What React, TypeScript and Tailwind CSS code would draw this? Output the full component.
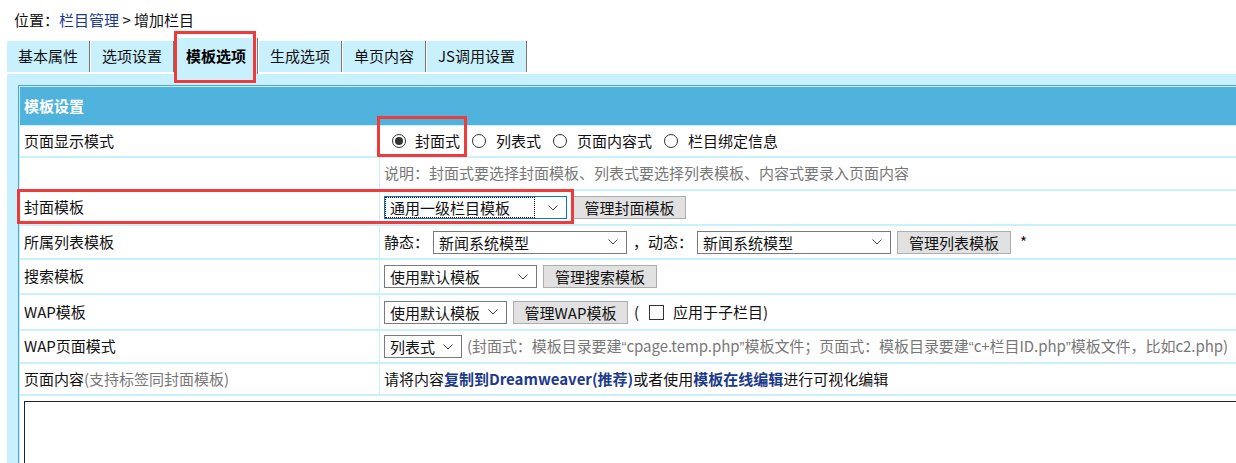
import React from "react";

const Chevron = () => (
  <svg width="10" height="6" viewBox="0 0 10 6" className="shrink-0">
    <polyline points="0.5,0.5 5,5 9.5,0.5" fill="none" stroke="#444" strokeWidth="1" />
  </svg>
);

function Select({ text, className, focused }: { text: string; className: string; focused?: boolean }) {
  return (
    <div
      className={
        "h-[23px] border bg-white flex items-center justify-between pr-[8px] shrink-0 " +
        (focused ? "border-[#0078d7] pl-[1px] " : "border-[#7a7a7a] pl-[5px] ") +
        className
      }
    >
      {focused ? (
        <span className="h-[19px] flex-1 mr-[14px] pl-[4px] leading-[19px] outline outline-1 outline-dotted outline-black">
          {text}
        </span>
      ) : (
        <span className="leading-[21px]">{text}</span>
      )}
      <Chevron />
    </div>
  );
}

function Btn({ text, className }: { text: string; className: string }) {
  return (
    <div
      className={
        "h-[23px] border border-[#adadad] bg-[#e1e1e1] flex items-center justify-center leading-[21px] shrink-0 " +
        className
      }
    >
      {text}
    </div>
  );
}

function Radio({ checked }: { checked?: boolean }) {
  return (
    <span className="w-[14px] h-[14px] rounded-full border border-[#333] bg-white flex items-center justify-center shrink-0">
      {checked ? <span className="w-[8px] h-[8px] rounded-full bg-[#333]" /> : null}
    </span>
  );
}

function Row({
  label,
  children,
  h,
}: {
  label: React.ReactNode;
  children?: React.ReactNode;
  h: string;
}) {
  return (
    <div className={"flex " + h}>
      <div className="w-[359px] bg-white pl-[4px] flex items-center shrink-0">{label}</div>
      <div className="flex-1 ml-[1px] bg-white pl-[4px] flex items-center">{children}</div>
    </div>
  );
}

const Q = ({ c }: { c: string }) => (
  <span className="font-['Liberation_Sans',sans-serif]">{c}</span>
);

export default function App() {
  const tabs = ["基本属性", "选项设置", "模板选项", "生成选项", "单页内容", "JS调用设置"];
  return (
    <div className="w-[1236px] h-[463px] overflow-hidden bg-white relative text-[15px] text-[#111] font-['Microsoft_YaHei','Noto_Sans_CJK_SC',sans-serif]">
      {/* breadcrumb */}
      <div className="h-[41px] pl-[14px] pt-[9px] leading-[22px]">
        位置：<span className="text-[#1c3a8c]">栏目管理</span> &gt; 增加栏目
      </div>

      {/* tabs */}
      <div className="flex pl-[7px] h-[31px] items-start">
        {tabs.map((t, i) => {
          const active = i === 2;
          return (
            <div
              key={t}
              className={
                "bg-[#c9f0fd] border-r border-r-[#777] flex items-center px-[11px] " +
                (i > 0 ? "border-l border-l-white " : "") +
                (active ? "h-[36px] -mt-[3px] font-bold text-black" : "h-[31px]")
              }
            >
              {t}
            </div>
          );
        })}
      </div>

      {/* panel */}
      <div className="mt-[2px] ml-[7px] w-[1320px] h-[400px] bg-[#c9f0fd] pt-[11px] pl-[11px]">
        <div className="w-[1290px] border border-[#4aa6d4] bg-[#c9f0fd] p-[1px]">
          <div className="h-[38px] bg-[#4fb3dd] text-white font-bold pl-[4px] flex items-center">模板设置</div>
          <div className="flex flex-col gap-[2px] mt-[1px]">
            <Row h="h-[30px]" label="页面显示模式">
              <div className="flex items-center pl-[8px]">
                <Radio checked />
                <span className="ml-[9px]">封面式</span>
                <span className="ml-[12px]"><Radio /></span>
                <span className="ml-[10px]">列表式</span>
                <span className="ml-[12px]"><Radio /></span>
                <span className="ml-[10px]">页面内容式</span>
                <span className="ml-[12px]"><Radio /></span>
                <span className="ml-[10px]">栏目绑定信息</span>
              </div>
            </Row>
            <Row h="h-[31px]" label="">
              <span className="text-[#777]">说明：封面式要选择封面模板、列表式要选择列表模板、内容式要录入页面内容</span>
            </Row>
            <Row h="h-[33px]" label="封面模板">
              <div className="flex items-center gap-[6px]">
                <Select text="通用一级栏目模板" className="w-[183px]" focused />
                <Btn text="管理封面模板" className="w-[113px]" />
              </div>
            </Row>
            <Row h="h-[32px]" label="所属列表模板">
              <div className="flex items-center">
                <span>静态：</span>
                <Select text="新闻系统模型" className="w-[194px] ml-[4px]" />
                <span className="ml-[6px]">，动态：</span>
                <Select text="新闻系统模型" className="w-[194px] ml-[4px]" />
                <Btn text="管理列表模板" className="w-[114px] ml-[6px]" />
                <span className="ml-[9px]">*</span>
              </div>
            </Row>
            <Row h="h-[33px]" label="搜索模板">
              <div className="flex items-center gap-[6px]">
                <Select text="使用默认模板" className="w-[153px]" />
                <Btn text="管理搜索模板" className="w-[114px]" />
              </div>
            </Row>
            <Row h="h-[34px]" label="WAP模板">
              <div className="flex items-center">
                <Select text="使用默认模板" className="w-[123px]" />
                <Btn text="管理WAP模板" className="w-[115px] ml-[6px]" />
                <span className="ml-[6px]">(</span>
                <span className="ml-[10px] w-[15px] h-[15px] border border-[#333] bg-white" />
                <span className="ml-[9px]">应用于子栏目)</span>
              </div>
            </Row>
            <Row h="h-[31px]" label="WAP页面模式">
              <div className="flex items-center">
                <Select text="列表式" className="w-[78px]" />
                <span className="ml-[5px] text-[#777] whitespace-nowrap tracking-[-0.05px]">
                  (封面式：模板目录要建<Q c="“" />cpage.temp.php<Q c="”" />模板文件；页面式：模板目录要建<Q c="“" />c+栏目ID.php<Q c="”" />模板文件，比如c2.php)
                </span>
              </div>
            </Row>
            <Row
              h="h-[30px]"
              label={
                <span>
                  页面内容<span className="text-[#777]">(支持标签同封面模板)</span>
                </span>
              }
            >
              <span className="whitespace-nowrap">
                请将内容<b className="text-[#1c3a8c]">复制到Dreamweaver(推荐)</b>或者使用
                <b className="text-[#1c3a8c]">模板在线编辑</b>进行可视化编辑
              </span>
            </Row>
            <div className="bg-white h-[80px] pt-[5px] pl-[4px]">
              <div className="w-[1270px] h-[100px] border border-[#222] bg-white" />
            </div>
          </div>
        </div>
      </div>

      {/* red annotation boxes */}
      <div className="absolute left-[174px] top-[31px] w-[82px] h-[52px] border-[3px] border-[#ef3b3b]" />
      <div className="absolute left-[377px] top-[116px] w-[90px] h-[41px] border-[3px] border-[#ef3b3b]" />
      <div className="absolute left-[17px] top-[189px] w-[557px] h-[35px] border-[3px] border-[#ef3b3b]" />
    </div>
  );
}
